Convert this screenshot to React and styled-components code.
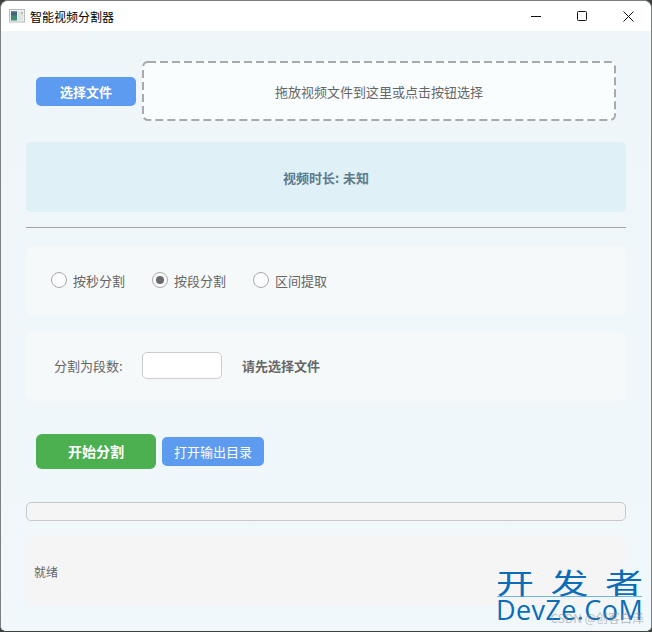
import React from "react";
import styled, { createGlobalStyle } from "styled-components";

const Global = createGlobalStyle`
  html, body { margin: 0; padding: 0; background: #3c3f3c; }
  #root { width: 652px; height: 632px; }
  * { box-sizing: border-box; }
`;

const Win = styled.div`
  position: relative;
  width: 652px;
  height: 632px;
  border: 1px solid #7d8080;
  border-bottom-color: #3f423f;
  border-radius: 8px 8px 6px 6px;
  overflow: hidden;
  background: #f0f7fb;
  display: flex;
  flex-direction: column;
  font-family: "Noto Sans CJK SC", "Microsoft YaHei", sans-serif;
  color: #555;
`;

const TitleBar = styled.div`
  height: 30px;
  flex: none;
  background: #fff;
  display: flex;
  align-items: center;
  padding-left: 8px;
  color: #000;
  font-size: 12px;
`;

const TitleText = styled.span`
  margin-left: 5px;
  flex: 1;
`;

const WinButton = styled.div`
  width: 46px;
  height: 30px;
  display: flex;
  align-items: center;
  justify-content: center;
`;

const Body = styled.div`
  flex: 1;
  display: flex;
  flex-direction: column;
  padding: 0 25px;
  background: linear-gradient(#eef6fa, #f1f8fc);
`;

const FileRow = styled.div`
  display: flex;
  align-items: center;
  gap: 6px;
  padding: 30px 10px 21px;
`;

const Button = styled.button`
  border: none;
  color: #fff;
  font-family: inherit;
  padding: 0 0 ${(p) => p.$lift || 0}px;
  display: flex;
  align-items: center;
  justify-content: center;
  background: ${(p) => p.$bg || "#5c9bef"};
  width: ${(p) => p.$w}px;
  height: ${(p) => p.$h}px;
  border-radius: ${(p) => p.$r || 5}px;
  font-size: ${(p) => p.$fs || 13}px;
  font-weight: ${(p) => p.$weight || 400};
`;

const Drop = styled.div`
  position: relative;
  width: 474px;
  height: 60px;
  border-radius: 5px;
  background: #f9fdfe;
  display: flex;
  align-items: center;
  justify-content: center;
  font-size: 13px;
  color: #666;
`;

const DashFrame = styled.svg`
  position: absolute;
  inset: 0;
  width: 474px;
  height: 60px;
`;

const Info = styled.div`
  height: 70px;
  background: #e0f0f7;
  border-radius: 5px;
  display: flex;
  align-items: center;
  justify-content: center;
  font-size: 13px;
  font-weight: 700;
  word-spacing: 1px;
  color: #5d7a8c;
`;

const Divider = styled.div`
  height: 1px;
  background: #a2a4a5;
  margin: 15px 0 18px;
`;

const Panel = styled.div`
  height: 70px;
  background: #f5f9fa;
  border-radius: 8px;
  display: flex;
  align-items: center;
  margin-bottom: 15px;
  padding-bottom: 2px;
`;

const RadioPanel = styled(Panel)`
  padding-left: 25px;
  gap: 27px;
`;

const RadioItem = styled.div`
  display: flex;
  align-items: center;
  gap: 6px;
  font-size: 13px;
  color: #666;
`;

const RadioCircle = styled.span`
  width: 16px;
  height: 16px;
  border-radius: 50%;
  border: 1px solid #aaa;
  background: #fbfcfd;
  display: flex;
  align-items: center;
  justify-content: center;
  &::after {
    content: "";
    width: 8px;
    height: 8px;
    border-radius: 50%;
    background: ${(p) => (p.$on ? "#6b6b6e" : "transparent")};
  }
`;

const SegPanel = styled(Panel)`
  padding-left: 28px;
`;

const SegLabel = styled.span`
  width: 88px;
  font-size: 13px;
  color: #666;
`;

const Input = styled.div`
  width: 80px;
  height: 27px;
  background: #fff;
  border: 1px solid #ccc;
  border-radius: 5px;
`;

const Hint = styled.span`
  margin-left: 20px;
  font-size: 13px;
  font-weight: 700;
  color: #666;
`;

const ActionRow = styled.div`
  display: flex;
  align-items: center;
  gap: 6px;
  padding: 18px 10px 33px;
`;

const Progress = styled.div`
  height: 19px;
  border: 1px solid #c8c8c8;
  border-radius: 5px;
  background: #f5f5f5;
`;

const Log = styled.div`
  height: 70px;
  margin-top: 15px;
  background: #f5f5f5;
  border-radius: 5px;
  display: flex;
  align-items: center;
  padding-left: 8px;
  font-size: 12px;
  color: #666;
`;

const Mark = styled.div`
  position: absolute;
  right: 9px;
  bottom: 9px;
  width: 145px;
  color: #0b6cb8;
`;

const MarkTop = styled.div`
  display: flex;
  justify-content: space-between;
  height: 30px;
  border-bottom: 1px solid #6fb6e2;
`;

const MarkGlyph = styled.span`
  display: block;
  font-size: 38px;
  line-height: 29px;
  height: 29px;
  width: 38px;
  margin: 0 -1px;
  transform: scaleY(0.76);
`;

const MarkBottom = styled.div`
  font-family: "Open Sans", "Noto Sans", sans-serif;
  font-size: 27px;
  line-height: 25px;
  height: 25px;
  margin-left: -1px;
  white-space: nowrap;
  letter-spacing: 0.4px;
`;

const MarkFaint = styled.div`
  position: absolute;
  right: 7px;
  bottom: 7px;
  font-size: 12px;
  line-height: 12px;
  color: #8f8f8f;
  opacity: 0.55;
  white-space: nowrap;
`;

export default function App() {
  return (
    <Win>
      <Global />
      <TitleBar>
        <svg width="16" height="16" viewBox="0 0 16 16">
          <rect x="0.5" y="1.5" width="15" height="12.5" fill="#eef0f0" stroke="#bbbcbc" />
          <rect x="2" y="3.5" width="6" height="9" fill="#3f8a78" />
          <rect x="2" y="3.5" width="6" height="4" fill="#44667c" />
          <rect x="9" y="3.5" width="5" height="9" fill="#dfe5e3" />
          <rect x="12" y="4" width="2" height="2" fill="#9ecbb0" />
        </svg>
        <TitleText>智能视频分割器</TitleText>
        <WinButton>
          <svg width="10" height="10" viewBox="0 0 10 10"><path d="M0 5.5H10" stroke="#111" /></svg>
        </WinButton>
        <WinButton>
          <svg width="10" height="10" viewBox="0 0 10 10"><rect x="0.5" y="0.5" width="9" height="9" rx="1" fill="none" stroke="#111" /></svg>
        </WinButton>
        <WinButton>
          <svg width="11" height="11" viewBox="0 0 11 11"><path d="M0.5 0.5L10.5 10.5M10.5 0.5L0.5 10.5" stroke="#111" /></svg>
        </WinButton>
      </TitleBar>
      <Body>
        <FileRow>
          <Button $w={100} $h={29} $weight={700}>选择文件</Button>
          <Drop>
            <DashFrame viewBox="0 0 474 60">
              <rect x="1" y="1" width="472" height="58" rx="5" fill="none" stroke="#a9a9a9" strokeWidth="2" strokeDasharray="8 4" />
            </DashFrame>
            拖放视频文件到这里或点击按钮选择
          </Drop>
        </FileRow>
        <Info>视频时长: 未知</Info>
        <Divider />
        <RadioPanel>
          <RadioItem><RadioCircle />按秒分割</RadioItem>
          <RadioItem><RadioCircle $on />按段分割</RadioItem>
          <RadioItem><RadioCircle />区间提取</RadioItem>
        </RadioPanel>
        <SegPanel>
          <SegLabel>分割为段数:</SegLabel>
          <Input />
          <Hint>请先选择文件</Hint>
        </SegPanel>
        <ActionRow>
          <Button $w={120} $h={35} $r={6} $bg="#4caf50" $fs={14} $weight={700} $lift={2}>开始分割</Button>
          <Button $w={102} $h={29}>打开输出目录</Button>
        </ActionRow>
        <Progress />
        <Log>就绪</Log>
      </Body>
      <Mark>
        <MarkTop><MarkGlyph>开</MarkGlyph><MarkGlyph>发</MarkGlyph><MarkGlyph>者</MarkGlyph></MarkTop>
        <MarkBottom>DevZe.CoM</MarkBottom>
      </Mark>
      <MarkFaint>CSDN @创客白泽</MarkFaint>
    </Win>
  );
}
